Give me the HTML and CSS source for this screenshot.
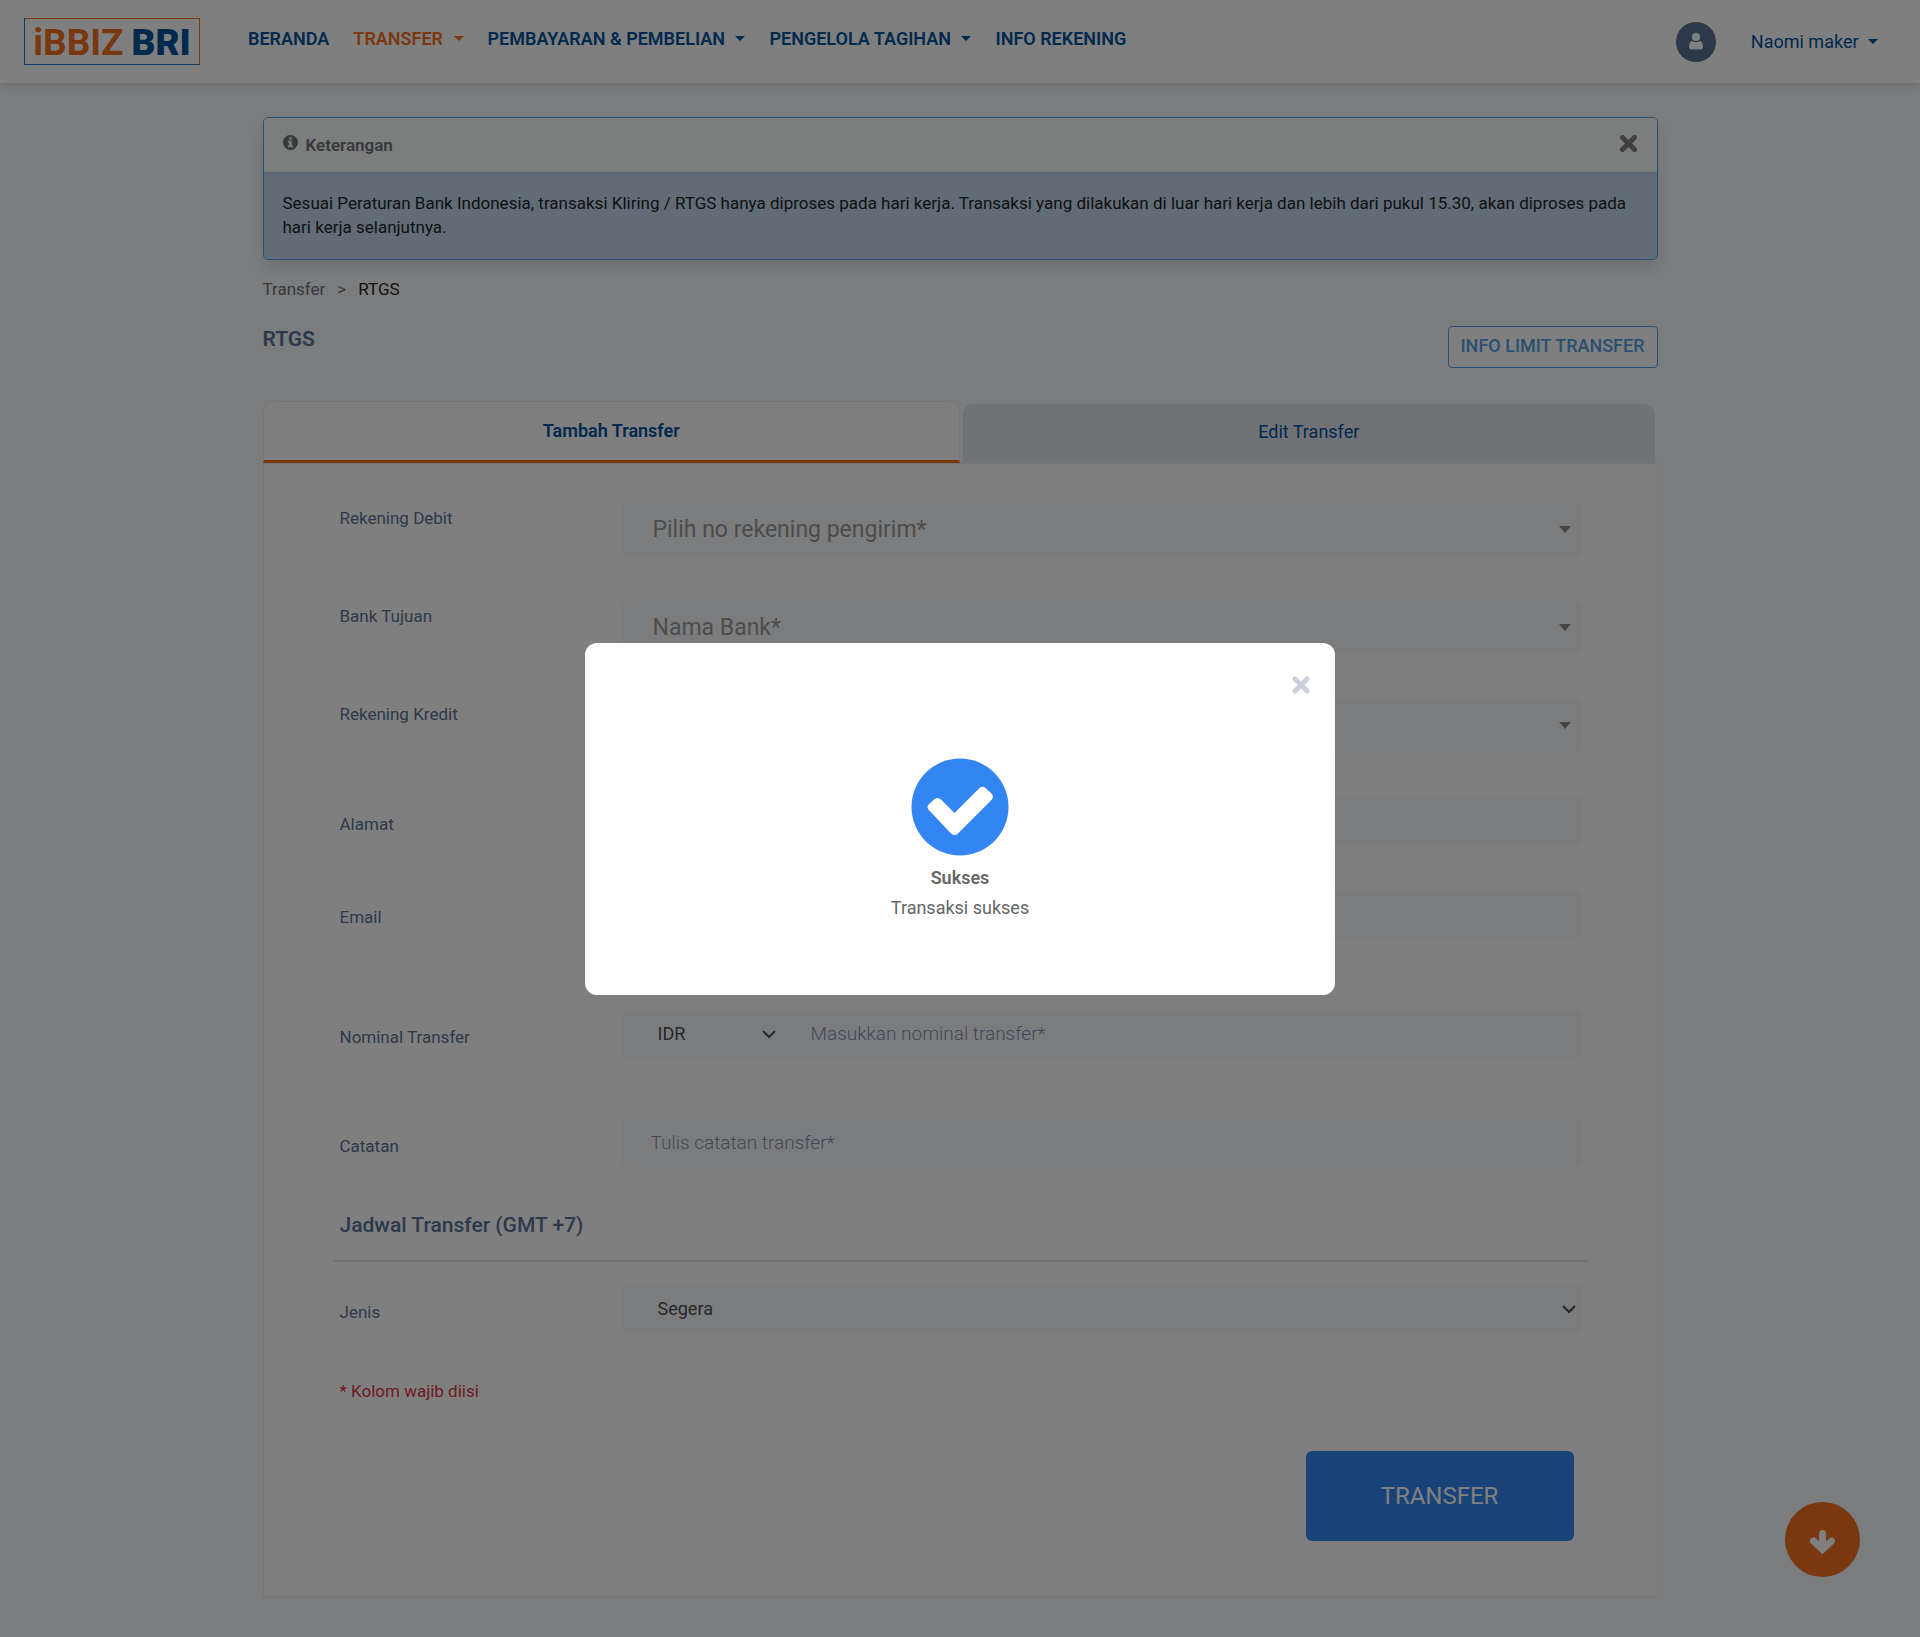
FILE: index.html
```html
<!DOCTYPE html>
<html lang="id">
<head>
<meta charset="utf-8">
<meta name="viewport" content="width=device-width, initial-scale=1">
<title>iBBIZ BRI - RTGS</title>
<link rel="stylesheet" href="styles.css">
</head>
<body>
<header class="navbar">
  <a class="logo" href="#"><span class="logo-ibbiz">iBBIZ</span><span class="logo-bri">BRI</span></a>
  <nav class="menu">
    <a href="#">BERANDA</a>
    <a class="active" href="#">TRANSFER <span class="caret"></span></a>
    <a href="#">PEMBAYARAN &amp; PEMBELIAN <span class="caret"></span></a>
    <a href="#">PENGELOLA TAGIHAN <span class="caret"></span></a>
    <a href="#">INFO REKENING</a>
  </nav>
  <span class="avatar">
    <svg width="14" height="17" viewBox="0 0 14 17" aria-hidden="true"><circle cx="7" cy="4" r="4"/><path d="M3 8Q7 10.500 11 8Q14 9 14 13.500Q14 16.500 11.500 16.500H2.500Q0 16.500 0 13.500Q0 9 3 8Z"/></svg>
  </span>
  <a class="user" href="#">Naomi maker <span class="caret"></span></a>
</header>

<main class="container">
  <section class="notice">
    <div class="notice-head">
      <svg class="notice-icon" width="15" height="15" viewBox="0 0 15 15" aria-hidden="true"><circle cx="7.500" cy="7.500" r="7.500" fill="#6c757d"/><path d="M6.200 2.200h2.600v2.200H6.200zM5 5.700h3.800v4.600H10v2H5v-2h1.200V7.600H5z" fill="#f7f7f7"/></svg>
      <h2>Keterangan</h2>
      <button class="close" type="button" aria-label="Tutup keterangan">
        <svg width="17" height="17" viewBox="0 0 17 17" aria-hidden="true"><path d="M2.500 2.500l12 12M14.500 2.500l-12 12"/></svg>
      </button>
    </div>
    <p class="notice-body">Sesuai Peraturan Bank Indonesia, transaksi Kliring / RTGS hanya diproses pada hari kerja. Transaksi yang dilakukan di luar hari kerja dan lebih dari pukul 15.30, akan diproses pada hari kerja selanjutnya.</p>
  </section>

  <nav class="breadcrumb" aria-label="Breadcrumb"><a href="#">Transfer</a><span>&gt;</span><span class="current">RTGS</span></nav>

  <div class="title-row">
    <h1>RTGS</h1>
    <button class="limit" type="button">INFO LIMIT TRANSFER</button>
  </div>

  <div class="tabs">
    <button class="tab selected" type="button">Tambah Transfer</button>
    <button class="tab" type="button">Edit Transfer</button>
  </div>

  <form class="card">
    <div class="row tall">
      <label for="debit">Rekening Debit</label>
      <div class="field"><select id="debit"><option>Pilih no rekening pengirim*</option></select><span class="caret"></span></div>
    </div>
    <div class="row tall">
      <label for="bank">Bank Tujuan</label>
      <div class="field"><select id="bank"><option>Nama Bank*</option></select><span class="caret"></span></div>
    </div>
    <div class="row tall">
      <label for="kredit">Rekening Kredit</label>
      <div class="field"><select id="kredit"><option></option></select><span class="caret"></span></div>
    </div>
    <div class="row">
      <label for="alamat">Alamat</label>
      <div class="field"><input id="alamat" type="text"></div>
    </div>
    <div class="row email">
      <label for="email">Email</label>
      <div class="field"><input id="email" type="email"></div>
    </div>
    <div class="row nominal">
      <label for="nominal">Nominal Transfer</label>
      <div class="amount">
        <div class="field"><select id="currency" aria-label="Mata uang"><option>IDR</option></select><svg class="chevron" width="14" height="9" viewBox="0 0 14 9" aria-hidden="true"><path d="M1 1l6 6 6-6"/></svg></div>
        <div class="field"><input id="nominal" type="text" placeholder="Masukkan nominal transfer*"></div>
      </div>
    </div>
    <div class="row">
      <label for="catatan">Catatan</label>
      <div class="field"><input id="catatan" type="text" placeholder="Tulis catatan transfer*"></div>
    </div>
    <h2 class="schedule">Jadwal Transfer (GMT +7)</h2>
    <div class="row">
      <label for="jenis">Jenis</label>
      <div class="field"><select id="jenis"><option>Segera</option></select><svg class="chevron" width="14" height="9" viewBox="0 0 14 9" aria-hidden="true"><path d="M1 1l6 6 6-6"/></svg></div>
    </div>
    <p class="required">* Kolom wajib diisi</p>
    <div class="actions"><button class="submit" type="button">TRANSFER</button></div>
  </form>
</main>

<button class="scroll-down" type="button" aria-label="Ke bawah">
  <svg width="25" height="24" viewBox="0 0 25 24" aria-hidden="true"><path d="M12.500 3.500v14M3.500 11l9 8.500 9-8.500"/></svg>
</button>

<div class="overlay">
  <div class="modal" role="dialog" aria-modal="true" aria-labelledby="modal-title">
    <button class="close modal-close" type="button" aria-label="Tutup">
      <svg width="18" height="18" viewBox="0 0 18 18" aria-hidden="true"><path d="M3 3l12 12M15 3l-12 12"/></svg>
    </button>
    <svg class="check" width="98" height="98" viewBox="0 0 98 98" aria-hidden="true"><circle cx="49" cy="49" r="48.500" fill="#3385f3"/><path d="M17.500 46.500Q15.500 49.500 17.800 52L40 75.500Q43.500 78.500 47 75.500L80.500 42Q83.300 38.500 80.500 35.500L74.500 30Q71.500 27.500 68.500 30L43.500 55 30 41.500Q26.500 38.500 23 41.500Z" fill="#fff"/></svg>
    <h2 id="modal-title">Sukses</h2>
    <p>Transaksi sukses</p>
  </div>
</div>
</body>
</html>
```
FILE: styles.css
```css
* { box-sizing: border-box; }
body {
  margin: 0;
  background: #f7f9fc;
  color: #212529;
  font: 400 17px/24px Roboto, "Liberation Sans", sans-serif;
}
h1, h2, p { margin: 0; }
a { color: inherit; text-decoration: none; }
button, input, select { font: inherit; color: inherit; }
button { cursor: pointer; }

.caret {
  display: inline-block;
  border: 5px solid transparent;
  border-top-color: currentColor;
  border-bottom: 0;
}

/* Top bar */
.navbar {
  display: flex;
  align-items: center;
  height: 83px;
  padding: 0 42px 0 24px;
  background: #fff;
  box-shadow: 0 2px 12px rgba(0, 0, 0, .15);
  color: #00529c;
}
.logo {
  display: flex;
  justify-content: center;
  gap: 8px;
  width: 176px;
  height: 47px;
  border: 1px solid #2471b5;
  border-top-color: #f37021;
  border-right-color: #f37021;
  font-size: 37px;
  line-height: 47px;
}
.logo-ibbiz { color: #f37021; font-weight: 700; }
.logo-bri { color: #00529c; font-weight: 900; }
.menu {
  display: flex;
  gap: 24px;
  margin: 0 auto 6px 48px;
  font-size: 18px;
  font-weight: 600;
}
.menu .caret { margin-left: 6px; vertical-align: 4px; }
.menu .active { color: #f37021; }
.avatar {
  display: flex;
  align-items: center;
  justify-content: center;
  width: 40px;
  height: 40px;
  border-radius: 50%;
  background: #5b7396;
}
.avatar svg { fill: #fff; }
.user { margin-left: 35px; font-size: 18px; }
.user .caret { margin-left: 5px; vertical-align: 4px; }

.container {
  max-width: 1395px;
  margin: 34px auto 39px;
}

/* Notice */
.notice {
  border: 1px solid #569fe4;
  border-radius: 5px;
  background: #c4d8ec;
  box-shadow: 0 8px 16px rgba(0, 0, 0, .1);
  overflow: hidden;
}
.notice-head {
  display: flex;
  align-items: center;
  height: 56px;
  padding: 0 20px 0 19px;
  border-bottom: 2px solid #b8c9da;
  background: #f9fafb;
}
.notice-icon { margin: 0 8px 6px 0; }
.notice-head h2 {
  color: #6c757d;
  font-size: 17px;
  font-weight: 600;
}
.close {
  display: flex;
  padding: 0;
  border: 0;
  background: none;
}
.close svg { fill: none; stroke: #808080; stroke-width: 5; stroke-linecap: round; }
.notice-head .close { margin: 0 0 4px auto; }
.notice-body { padding: 17px 19px 20px; }

.breadcrumb {
  display: flex;
  gap: 12px;
  margin-top: 17px;
  color: #6c757d;
}
.breadcrumb .current { color: #212529; }

.title-row {
  display: flex;
  justify-content: space-between;
  margin-top: 25px;
}
.title-row h1 {
  color: #5b7396;
  font-size: 21px;
  font-weight: 600;
  line-height: 26px;
}
.limit {
  height: 42px;
  padding: 0 12px 2px;
  border: 1px solid #569fe4;
  border-radius: 4px;
  background: #fff;
  color: #569fe4;
  font-size: 18px;
  font-weight: 500;
}

/* Tabs and form card */
.tabs {
  display: grid;
  grid-template-columns: 1fr 1fr;
  align-items: end;
  margin-top: 33px;
}
.tab {
  height: 59px;
  margin: 0 3px;
  padding: 0 0 3px;
  border: 0;
  border-radius: 10px 10px 0 0;
  background: #e2e4eb;
  color: #00529c;
  font-size: 18px;
}
.tab.selected {
  height: 62px;
  margin: 0;
  padding: 0;
  border: 1px solid #ebedf0;
  border-bottom: 3px solid #f37021;
  background: #fff;
  font-weight: 600;
}
.card {
  padding: 39px 75px 55px 76px;
  border: 1px solid #ebedf0;
  background: #fff;
}
.row {
  display: grid;
  grid-template-columns: 282px 1fr;
  margin-bottom: 45px;
}
.row label {
  padding-top: 15px;
  color: #5b7396;
}
.row.tall label { padding-top: 3px; }
.row.email { margin-bottom: 72px; }
.row.nominal { margin-bottom: 61px; }

.field {
  display: grid;
  align-items: center;
}
.field > * { grid-area: 1 / 1; }
.field > .caret,
.field > .chevron {
  justify-self: end;
  pointer-events: none;
}
.field > .caret {
  margin-right: 11px;
  border-width: 7px 6px 0;
  color: #888;
}
.chevron {
  margin-right: 6px;
  fill: none;
  stroke: #495057;
  stroke-width: 2;
}
.field input,
.field select {
  appearance: none;
  width: 100%;
  height: 48px;
  padding: 0 29px 2px;
  border: 0;
  border-radius: 5px;
  background: #f7f9fc;
  color: #495057;
  font-size: 18px;
}
.field input { font-size: 19px; font-weight: 300; }
.field select { padding: 0 36px; }
.field ::placeholder { color: #8390b0; opacity: 1; }
.tall .field select {
  height: 53px;
  padding-left: 31px;
  color: #999;
  font-size: 23px;
}
.amount {
  display: grid;
  grid-template-columns: 160px 1fr;
  border-radius: 5px;
  background: #f7f9fc;
}
.schedule {
  margin: 0 -6px 23px;
  padding: 1px 6px 23px;
  border-bottom: 2px solid #e3e5e8;
  color: #5b7396;
  font-size: 21px;
  font-weight: 500;
}
.required { margin-top: 46px; color: #dc3545; }
.actions {
  display: flex;
  justify-content: flex-end;
  margin-top: 48px;
  padding-right: 8px;
}
.submit {
  width: 268px;
  height: 90px;
  border: 0;
  border-radius: 6px;
  background: #3385f3;
  color: #fff;
  font-size: 24px;
}

.scroll-down {
  position: fixed;
  right: 60px;
  bottom: 60px;
  display: flex;
  align-items: center;
  justify-content: center;
  width: 75px;
  height: 75px;
  padding: 4px 0 0;
  border: 0;
  border-radius: 50%;
  background: #f37021;
}
.scroll-down svg {
  fill: none;
  stroke: #fff;
  stroke-width: 7;
  stroke-linecap: round;
}

/* Success dialog */
.overlay {
  position: fixed;
  inset: 0;
  display: flex;
  align-items: center;
  justify-content: center;
  background: rgba(0, 0, 0, .5);
}
.modal {
  display: flex;
  flex-direction: column;
  align-items: center;
  width: 750px;
  max-width: 100%;
  padding: 33px 25px 75px;
  border-radius: 12px;
  background: #fff;
  color: #666;
  font-size: 18px;
}
.modal-close { align-self: flex-end; }
.modal-close svg { stroke: #cbd0dc; }
.check { margin: 64px 0 10px; }
.modal h2 {
  margin-bottom: 6px;
  font-size: 18px;
  font-weight: 600;
}
```
